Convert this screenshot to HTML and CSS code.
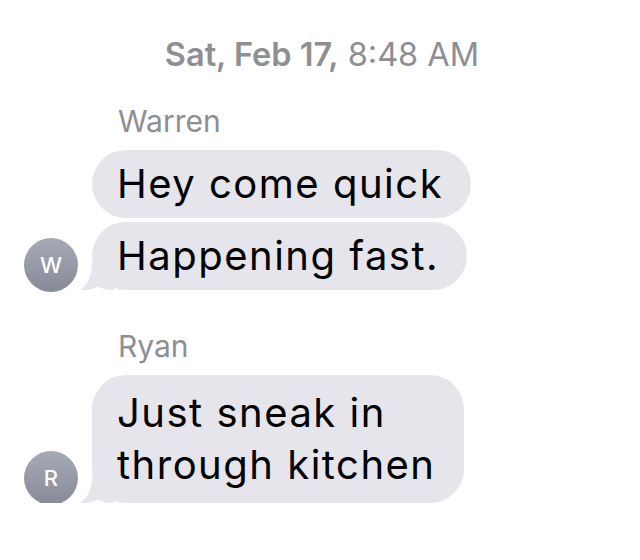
FILE: index.html
```html
<!DOCTYPE html>
<html lang="en">

<head>
    <meta charset="UTF-8">
    <meta name="viewport" content="width=device-width, initial-scale=1.0">
    <title>Messages</title>

    <link rel="stylesheet" href="styles.css">
</head>

<body>
    <main class="thread">

        <div class="timestamp"><b>Sat, Feb 17,</b> 8:48 AM</div>

        <section class="group">
            <div class="group__sender">Warren</div>
            <div class="group__body">
                <div class="avatar">W</div>
                <div class="group__bubbles">
                    <div class="bubble">Hey come quick</div>
                    <div class="bubble">Happening fast.
                        <svg class="bubble__tail" viewBox="0 0 34 26" width="34" height="26">
                            <path d="M12 0 C12 13 7 21 0 26 C7 26.5 13 25 18 22.5 C22 25 27 26 34 26 L34 0 Z" />
                        </svg>
                    </div>
                </div>
            </div>
        </section>

        <section class="group">
            <div class="group__sender">Ryan</div>
            <div class="group__body">
                <div class="avatar">R</div>
                <div class="group__bubbles">
                    <div class="bubble bubble--tall">Just sneak in<br>through kitchen
                        <svg class="bubble__tail" viewBox="0 0 34 26" width="34" height="26">
                            <path d="M12 0 C12 13 7 21 0 26 C7 26.5 13 25 18 22.5 C22 25 27 26 34 26 L34 0 Z" />
                        </svg>
                    </div>
                </div>
            </div>
        </section>

    </main>
</body>

</html>
```

FILE: styles.css
```css
body {
    margin: 0;
    background-color: #fff;
    font-family: Inter, "Liberation Sans", sans-serif;
}

.thread {
    padding: 37px 0 0 24px;
}

.timestamp {
    font-size: 32.5px;
    line-height: 36px;
    color: #8e8e93;
    text-align: center;
    margin-left: -20px;
}

.timestamp b {
    font-weight: 600;
}

.group {
    margin-top: 30px;
}

.group + .group {
    margin-top: 38px;
}

.group__sender {
    font-size: 30px;
    line-height: 36px;
    color: #8e8e93;
    margin: 0 0 11px 94px;
}

.group__body {
    display: flex;
    align-items: flex-end;
    gap: 14px;
}

.group__bubbles {
    display: flex;
    flex-direction: column;
    align-items: flex-start;
    gap: 4px;
}

.avatar {
    flex: none;
    width: 54px;
    height: 54px;
    margin-bottom: -2px;
    border-radius: 50%;
    background: linear-gradient(#a6aab6, #878b98);
    color: #fff;
    font-size: 22px;
    font-weight: 500;
    display: flex;
    align-items: center;
    justify-content: center;
}

.bubble {
    position: relative;
    background-color: #e6e5eb;
    color: #000;
    font-size: 40px;
    line-height: 52px;
    letter-spacing: 1.5px;
    padding: 8px 28px 8px 25px;
    border-radius: 34px;
}

.bubble--tall {
    padding-top: 12px;
    padding-bottom: 12px;
}

.bubble__tail {
    position: absolute;
    left: -12px;
    bottom: 0;
    fill: #e6e5eb;
}
```
